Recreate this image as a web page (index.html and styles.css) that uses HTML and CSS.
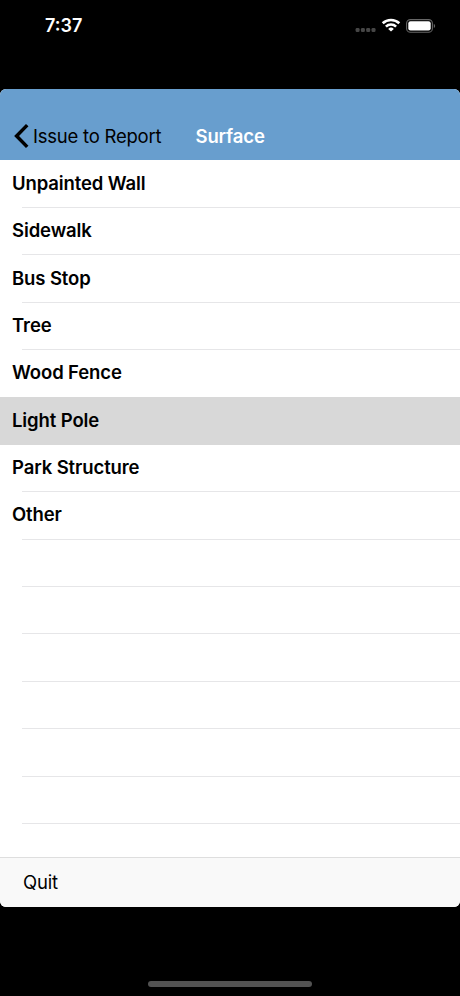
FILE: index.html
```html
<!DOCTYPE html>
<html lang="en">
<head>
<meta charset="utf-8">
<meta name="viewport" content="width=device-width">
<title>Surface</title>
<link rel="stylesheet" href="styles.css">
</head>
<body>
<header class="status">
  <time class="clock">7:37</time>
  <div class="indicators">
    <svg class="cell" width="22" height="6" viewBox="0 0 22 6"><g fill="#464646"><rect x=".6" y="1" width="4" height="4" rx="1.3"/><rect x="5.9" y="1" width="4" height="4" rx="1.3"/><rect x="11.2" y="1" width="4" height="4" rx="1.3"/><rect x="16.5" y="1" width="4" height="4" rx="1.3"/></g></svg>
    <svg class="wifi" width="20" height="14" viewBox="0 0 20 14"><g fill="none" stroke="#fff" stroke-width="2.6"><path d="M1.7 5.3a11.9 11.9 0 0 1 16.6 0"/><path d="M4.9 8.6a7.3 7.3 0 0 1 10.2 0"/></g><path d="M10 13.6 7.2 10.9a4 4 0 0 1 5.6 0Z" fill="#fff"/></svg>
    <svg class="battery" width="30" height="14" viewBox="0 0 30 14"><rect x=".6" y=".6" width="25.8" height="12.6" rx="3.8" fill="none" stroke="#666" stroke-width="1.1"/><rect x="2.3" y="2.3" width="22.4" height="9.2" rx="2.2" fill="#fff"/><path d="M27.8 4.7a2.5 2.5 0 0 1 0 4.4Z" fill="#666"/></svg>
  </div>
</header>
<main class="sheet">
  <nav class="navbar">
    <a class="back"><svg class="chevron" width="16" height="26" viewBox="0 0 16 26"><path d="M13 3.4 3.6 13l9.4 9.6" fill="none" stroke="#000" stroke-width="3.5" stroke-linecap="square" stroke-linejoin="miter"/></svg><span class="back-label">Issue to Report</span></a>
    <h1 class="title">Surface</h1>
  </nav>
  <ul class="list">
    <li class="row">Unpainted Wall</li>
    <li class="row">Sidewalk</li>
    <li class="row">Bus Stop</li>
    <li class="row">Tree</li>
    <li class="row plain">Wood Fence</li>
    <li class="row selected plain">Light Pole</li>
    <li class="row">Park Structure</li>
    <li class="row">Other</li>
    <li class="row"></li>
    <li class="row"></li>
    <li class="row"></li>
    <li class="row"></li>
    <li class="row"></li>
    <li class="row"></li>
  </ul>
  <footer class="toolbar">Quit</footer>
</main>
<div class="home"></div>
</body>
</html>
```

FILE: styles.css
```css
* { box-sizing: border-box; }
body {
  margin: 0;
  height: 996px;
  display: flex;
  flex-direction: column;
  background: #000;
  color: #000;
  font-family: Inter, "Liberation Sans", sans-serif;
  overflow: hidden;
}
.status {
  height: 89px;
  display: flex;
  justify-content: space-between;
  align-items: flex-start;
  padding: 14px 24px 0 45px;
  color: #fff;
}
.clock { font-size: 18px; line-height: 24px; font-weight: 600; }
.indicators { display: flex; align-items: center; padding-top: 4px; }
.cell { margin: 7px 5px 0 0; }
.wifi { margin: 0 5px 2px -1px; }
.battery { margin-bottom: 1px; }
.sheet {
  height: 818px;
  display: flex;
  flex-direction: column;
  background: #fff;
  border-radius: 6px;
  overflow: hidden;
}
.navbar {
  height: 71.45px;
  flex: none;
  display: flex;
  align-items: flex-end;
  padding: 0 0 11.45px 13px;
  background: #689ece;
}
.back { display: flex; align-items: center; width: 182.5px; height: 26px; }
.chevron { flex: none; margin-right: 4px; }
.back-label { font-size: 18.5px; line-height: 26px; letter-spacing: -.23px; white-space: nowrap; }
.title { margin: 0; font-size: 18.5px; line-height: 26px; font-weight: 600; letter-spacing: -.15px; color: #fff; }
.list { list-style: none; margin: 0; padding: 0; flex: 1; overflow: hidden; }
.row {
  height: 47.4px;
  padding: .3px 0 0 12px;
  font-size: 18.5px;
  line-height: 45.4px;
  font-weight: 600;
  letter-spacing: -.11px;
  background: linear-gradient(#e6e6e8, #e6e6e8) 22px 100% / 100% 1px no-repeat;
}
.plain { background: none; }
.selected { background: #d8d8d8; }
.toolbar {
  height: 50px;
  flex: none;
  padding-left: 23px;
  border-top: 1px solid #dedede;
  background: #f9f9f9;
  font-size: 18.5px;
  line-height: 49px;
  letter-spacing: -.15px;
}
.home { width: 164px; height: 6px; margin: 74px auto 0; border-radius: 3px; background: #525252; }
```
